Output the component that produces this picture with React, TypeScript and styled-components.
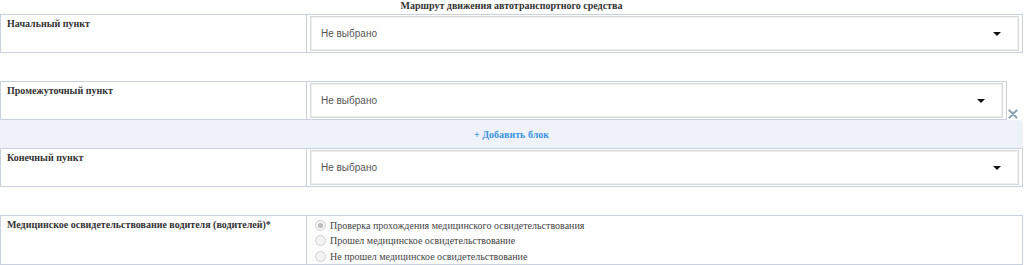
import React from "react";
import styled, { createGlobalStyle } from "styled-components";

const Global = createGlobalStyle`
  html, body { margin: 0; padding: 0; background: #fff; }
  body { font-family: "Liberation Serif", "Times New Roman", serif; color: #333; }
`;

const Page = styled.div`
  width: 1023px;
  display: flex;
  flex-direction: column;
`;

const Title = styled.div`
  height: 14px;
  line-height: 11px;
  text-align: center;
  font-weight: bold;
  font-size: 10px;
  color: #333;
`;

const Row = styled.div<{ $narrow?: boolean; $h?: number }>`
  display: grid;
  grid-template-columns: 306px 1fr;
  border: 1px solid #c9d1df;
  height: ${(p) => p.$h ?? 39}px;
  box-sizing: border-box;
  width: ${(p) => (p.$narrow ? "1007px" : "1023px")};
`;

const Label = styled.div`
  border-right: 1px solid #c9d1df;
  padding: 3px 6px;
  font-size: 10px;
  font-weight: bold;
  color: #333;
  line-height: 12px;
`;

const Cell = styled.div`
  padding: 1px 3px 1px 3px;
  display: flex;
`;

const Select = styled.div`
  flex: 1;
  border: 1px solid #d6d9de;
  box-shadow: inset 0 0 0 1px #f0f0f0;
  background: #fff;
  display: flex;
  align-items: center;
  justify-content: space-between;
  padding: 0 17px 0 10px;
  font-family: "Liberation Sans", Arial, sans-serif;
  font-size: 10px;
  color: #555;
`;

const Arrow = styled.span`
  width: 0;
  height: 0;
  border-left: 4px solid transparent;
  border-right: 4px solid transparent;
  border-top: 4px solid #111;
`;

const Gap = styled.div`
  height: 28px;
`;

const Block = styled.div`
  display: flex;
  align-items: flex-end;
`;

const Close = styled.svg`
  width: 10px;
  height: 10px;
  margin-left: 1px;
  margin-bottom: 1px;
  flex-shrink: 0;
`;

const AddBand = styled.div`
  height: 28px;
  background: #eff3f9;
  border-top-right-radius: 4px;
  display: flex;
  align-items: center;
  justify-content: center;
  color: #3b94e6;
  font-weight: bold;
  font-size: 10px;
`;

const Radios = styled.div`
  display: flex;
  flex-direction: column;
  padding: 2px 6px 0 8px;
  gap: 1.5px;
`;

const RadioRow = styled.label`
  display: flex;
  align-items: center;
  font-size: 10px;
  color: #444;
  height: 14px;
`;

const Dot = styled.span<{ $on?: boolean }>`
  width: 9px;
  height: 9px;
  border-radius: 50%;
  border: 1px solid #cfcfcf;
  background: #f3f3f3;
  margin-right: 4px;
  position: relative;
  &::after {
    content: "";
    display: ${(p) => (p.$on ? "block" : "none")};
    position: absolute;
    left: 2px;
    top: 2px;
    width: 5px;
    height: 5px;
    border-radius: 50%;
    background: #bbb;
  }
`;

const SelectField = () => (
  <Cell>
    <Select>
      <span>Не выбрано</span>
      <Arrow />
    </Select>
  </Cell>
);

export default function App() {
  return (
    <Page>
      <Global />
      <Title>Маршрут движения автотранспортного средства</Title>
      <Row>
        <Label>Начальный пункт</Label>
        <SelectField />
      </Row>
      <Gap />
      <Block>
        <Row $narrow>
          <Label>Промежуточный пункт</Label>
          <SelectField />
        </Row>
        <Close viewBox="0 0 10 10">
          <path d="M1.5 1.5 L8.5 8.5 M8.5 1.5 L1.5 8.5" stroke="#8ea3b7" strokeWidth="2.2" strokeLinecap="round" />
        </Close>
      </Block>
      <AddBand>+ Добавить блок</AddBand>
      <Row>
        <Label>Конечный пункт</Label>
        <SelectField />
      </Row>
      <Gap />
      <Row $h={50}>
        <Label>Медицинское освидетельствование водителя (водителей)*</Label>
        <Radios>
          <RadioRow>
            <Dot $on />
            Проверка прохождения медицинского освидетельствования
          </RadioRow>
          <RadioRow>
            <Dot />
            Прошел медицинское освидетельствование
          </RadioRow>
          <RadioRow>
            <Dot />
            Не прошел медицинское освидетельствование
          </RadioRow>
        </Radios>
      </Row>
    </Page>
  );
}
